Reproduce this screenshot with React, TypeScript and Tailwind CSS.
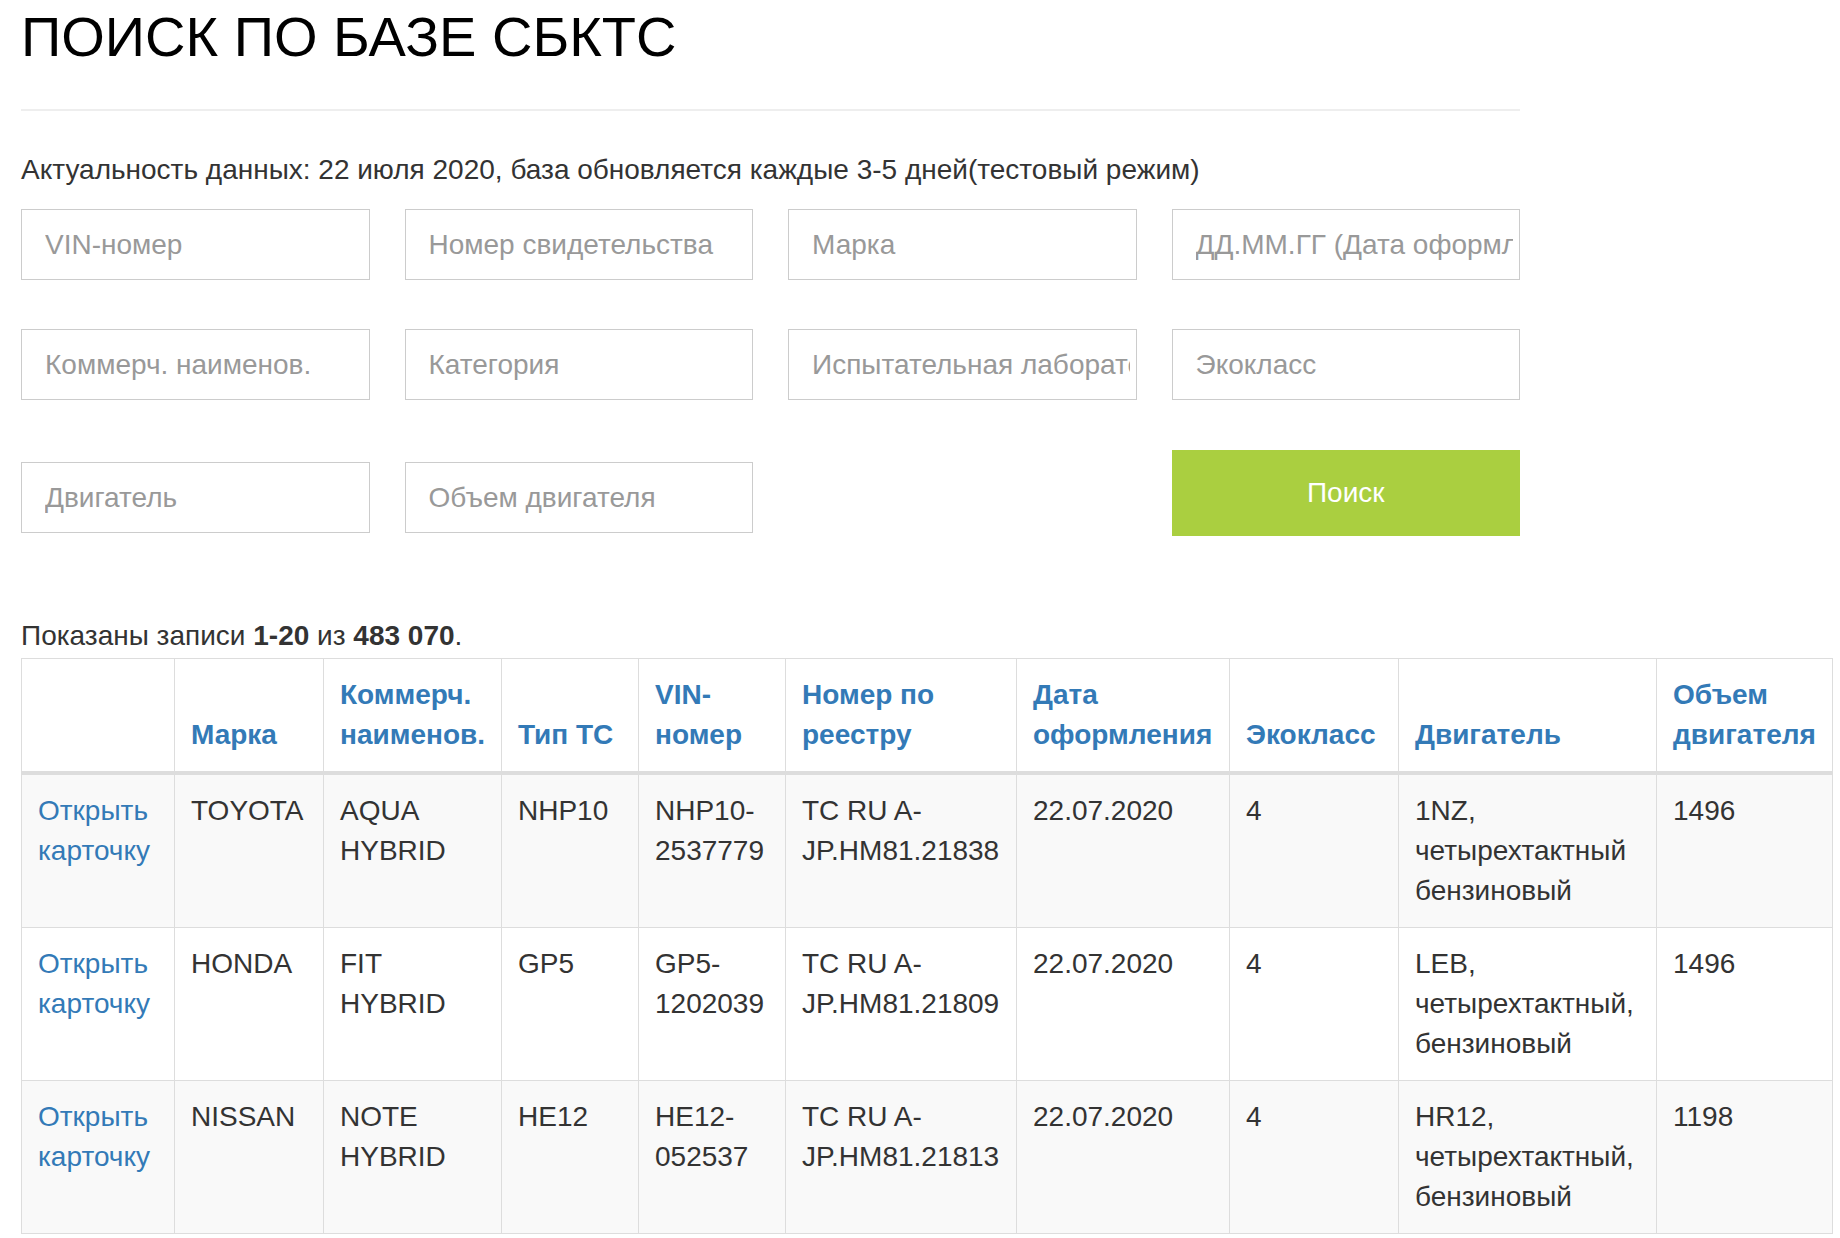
import React from "react";

const headers: string[][] = [
  [],
  ["Марка"],
  ["Коммерч.", "наименов."],
  ["Тип ТС"],
  ["VIN-", "номер"],
  ["Номер по", "реестру"],
  ["Дата", "оформления"],
  ["Экокласс"],
  ["Двигатель"],
  ["Объем", "двигателя"],
];

const widths = [153, 149, 178, 137, 147, 231, 213, 169, 258, 176];

const rows: string[][][] = [
  [
    ["TOYOTA"],
    ["AQUA", "HYBRID"],
    ["NHP10"],
    ["NHP10-", "2537779"],
    ["ТС RU A-", "JP.HM81.21838"],
    ["22.07.2020"],
    ["4"],
    ["1NZ,", "четырехтактный", "бензиновый"],
    ["1496"],
  ],
  [
    ["HONDA"],
    ["FIT", "HYBRID"],
    ["GP5"],
    ["GP5-", "1202039"],
    ["ТС RU A-", "JP.HM81.21809"],
    ["22.07.2020"],
    ["4"],
    ["LEB,", "четырехтактный,", "бензиновый"],
    ["1496"],
  ],
  [
    ["NISSAN"],
    ["NOTE", "HYBRID"],
    ["HE12"],
    ["HE12-", "052537"],
    ["ТС RU A-", "JP.HM81.21813"],
    ["22.07.2020"],
    ["4"],
    ["HR12,", "четырехтактный,", "бензиновый"],
    ["1198"],
  ],
];

function Lines({ lines }: { lines: string[] }) {
  return (
    <>
      {lines.map((l, i) => (
        <span key={i} className="block whitespace-nowrap">
          {l}
        </span>
      ))}
    </>
  );
}

function Field({ placeholder }: { placeholder: string }) {
  return (
    <input
      type="text"
      placeholder={placeholder}
      className="h-[71px] w-full border border-[#cccccc] bg-white pl-[23px] pr-[6px] text-[28px] text-[#555555] placeholder:text-[#999999] outline-none"
    />
  );
}

export default function App() {
  return (
    <div className="min-h-screen bg-white font-['Liberation_Sans',Arial,sans-serif] text-[#333333]">
      <div className="px-[21px]">
        <div className="w-[1499px]">
          <h1 className="pt-[9px] text-[56px] leading-none font-normal text-black">
            ПОИСК ПО БАЗЕ СБКТС
          </h1>
          <div className="mt-[44px] h-[2px] bg-[#eeeeee]" />
          <p className="mt-[39px] text-[28px] leading-[40px]">
            Актуальность данных: 22 июля 2020, база обновляется каждые 3-5 дней(тестовый режим)
          </p>
          <div className="mt-[19px] grid grid-cols-4 gap-x-[35px] gap-y-[49px]">
            <Field placeholder="VIN-номер" />
            <Field placeholder="Номер свидетельства" />
            <Field placeholder="Марка" />
            <Field placeholder="ДД.ММ.ГГ (Дата оформления)" />
            <Field placeholder="Коммерч. наименов." />
            <Field placeholder="Категория" />
            <Field placeholder="Испытательная лаборатория" />
            <Field placeholder="Экокласс" />
            <div className="pt-[13px]">
              <Field placeholder="Двигатель" />
            </div>
            <div className="pt-[13px]">
              <Field placeholder="Объем двигателя" />
            </div>
            <div />
            <button className="mt-[1px] h-[86px] w-full bg-[#aacf40] text-[28px] text-white">
              Поиск
            </button>
          </div>
          <p className="mt-[80px] text-[28px] leading-[40px]">
            Показаны записи <b>1-20</b> из <b>483 070</b>.
          </p>
        </div>
        <table className="mt-[2px] table-fixed border-collapse text-[28px] leading-[40px]" style={{ width: 1811 }}>
          <colgroup>
            {widths.map((w, i) => (
              <col key={i} style={{ width: w }} />
            ))}
          </colgroup>
          <thead>
            <tr>
              {headers.map((h, i) => (
                <th
                  key={i}
                  className="border border-b-4 border-[#dddddd] p-[16px] text-left align-bottom font-bold text-[#337ab7]"
                >
                  <Lines lines={h} />
                </th>
              ))}
            </tr>
          </thead>
          <tbody>
            {rows.map((r, ri) => (
              <tr key={ri} className={ri % 2 === 0 ? "bg-[#f9f9f9]" : "bg-white"}>
                <td className="border border-[#dddddd] p-[16px] align-top text-[#337ab7]">
                  <Lines lines={["Открыть", "карточку"]} />
                </td>
                {r.map((c, ci) => (
                  <td key={ci} className="border border-[#dddddd] p-[16px] align-top">
                    <Lines lines={c} />
                  </td>
                ))}
              </tr>
            ))}
          </tbody>
        </table>
      </div>
    </div>
  );
}
